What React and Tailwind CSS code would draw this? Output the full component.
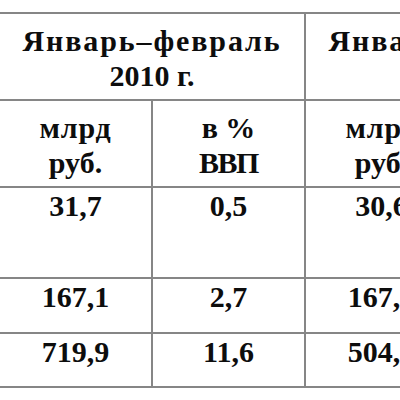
export default function App() {
  const cell = 'border-2 border-[#868686] text-center align-top px-1';
  const rows = [
    ['31,7', '0,5', '30,6', '0,6', 'h-[91px] pt-[9px]'],
    ['167,1', '2,7', '167,2', '3,0', 'h-[55px] pt-[9px]'],
    ['719,9', '11,6', '504,5', '9,1', 'h-[54px] pt-[8px]'],
  ];

  return (
    <div className="w-[400px] h-[400px] overflow-hidden bg-white">
      <table
        className="mt-[12px] ml-[-2px] border-collapse table-fixed w-[614px] text-[30px] leading-[35px] font-bold text-[#0d0d0d]"
        style={{ fontFamily: '"Liberation Serif", "Times New Roman", serif' }}
      >
        <colgroup>
          <col className="w-[153px]" />
          <col className="w-[153px]" />
          <col className="w-[153px]" />
          <col className="w-[153px]" />
        </colgroup>
        <tbody>
          {/* Шапка периодов */}
          <tr className="h-[87px]">
            <td colSpan={2} className={`${cell} pt-[9px]`}>
              <span className="tracking-[1.9px]">Январь–февраль</span>
              <br />
              2010 г.
            </td>
            <td colSpan={2} className={`${cell} pt-[9px]`}>
              <span className="tracking-[1.9px]">Январь–февраль</span>
              <br />
              2009 г.
            </td>
          </tr>
          <tr className="h-[87px]">
            <td className={`${cell} pt-[9px]`}>
              <span className="tracking-[0.8px]">млрд</span>
              <br />
              руб.
            </td>
            <td className={`${cell} pt-[9px]`}>
              в %
              <br />
              <span className="tracking-[-1.5px]">ВВП</span>
            </td>
            <td className={`${cell} pt-[9px]`}>
              <span className="tracking-[0.8px]">млрд</span>
              <br />
              руб.
            </td>
            <td className={`${cell} pt-[9px]`}>
              в %
              <br />
              <span className="tracking-[-1.5px]">ВВП</span>
            </td>
          </tr>
          {rows.map(([a, b, c, d, h]) => (
            <tr key={a} className={h}>
              <td className={cell}>{a}</td>
              <td className={cell}>{b}</td>
              <td className={cell}>{c}</td>
              <td className={cell}>{d}</td>
            </tr>
          ))}
        </tbody>
      </table>
    </div>
  );
}
